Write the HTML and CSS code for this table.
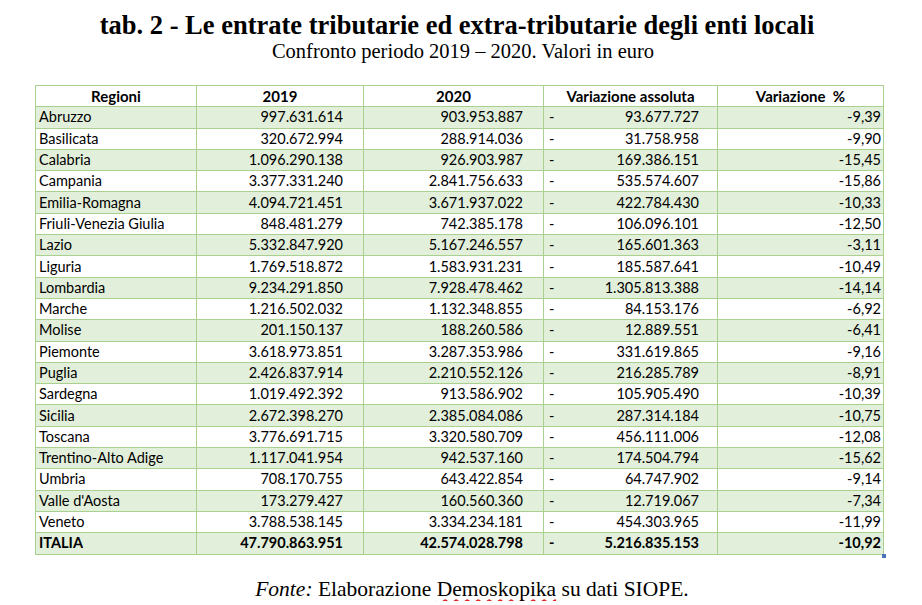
FILE: index.html
```html
<!DOCTYPE html>
<html lang="it">
<head>
<meta charset="utf-8">
<title>tab. 2</title>
<link rel="stylesheet" href="styles.css">
</head>
<body>
<div class="page">
  <h1 class="title">tab. 2 - Le entrate tributarie ed extra-tributarie degli enti locali</h1>
  <p class="subtitle">Confronto periodo 2019 – 2020. Valori in euro</p>
  <div class="table-wrap">
  <table class="data">
    <colgroup>
      <col class="c1"><col class="c2"><col class="c3"><col class="c4"><col class="c5">
    </colgroup>
    <thead>
      <tr><th>Regioni</th><th>2019</th><th>2020</th><th>Variazione assoluta</th><th>Variazione&nbsp; %</th></tr>
    </thead>
    <tbody>
      <tr class="alt"><td>Abruzzo</td><td class="num">997.631.614</td><td class="num">903.953.887</td><td class="acc"><span class="dash">-</span><span>93.677.727</span></td><td class="pct">-9,39</td></tr>
      <tr><td>Basilicata</td><td class="num">320.672.994</td><td class="num">288.914.036</td><td class="acc"><span class="dash">-</span><span>31.758.958</span></td><td class="pct">-9,90</td></tr>
      <tr class="alt"><td>Calabria</td><td class="num">1.096.290.138</td><td class="num">926.903.987</td><td class="acc"><span class="dash">-</span><span>169.386.151</span></td><td class="pct">-15,45</td></tr>
      <tr><td>Campania</td><td class="num">3.377.331.240</td><td class="num">2.841.756.633</td><td class="acc"><span class="dash">-</span><span>535.574.607</span></td><td class="pct">-15,86</td></tr>
      <tr class="alt"><td>Emilia-Romagna</td><td class="num">4.094.721.451</td><td class="num">3.671.937.022</td><td class="acc"><span class="dash">-</span><span>422.784.430</span></td><td class="pct">-10,33</td></tr>
      <tr><td>Friuli-Venezia Giulia</td><td class="num">848.481.279</td><td class="num">742.385.178</td><td class="acc"><span class="dash">-</span><span>106.096.101</span></td><td class="pct">-12,50</td></tr>
      <tr class="alt"><td>Lazio</td><td class="num">5.332.847.920</td><td class="num">5.167.246.557</td><td class="acc"><span class="dash">-</span><span>165.601.363</span></td><td class="pct">-3,11</td></tr>
      <tr><td>Liguria</td><td class="num">1.769.518.872</td><td class="num">1.583.931.231</td><td class="acc"><span class="dash">-</span><span>185.587.641</span></td><td class="pct">-10,49</td></tr>
      <tr class="alt"><td>Lombardia</td><td class="num">9.234.291.850</td><td class="num">7.928.478.462</td><td class="acc"><span class="dash">-</span><span>1.305.813.388</span></td><td class="pct">-14,14</td></tr>
      <tr><td>Marche</td><td class="num">1.216.502.032</td><td class="num">1.132.348.855</td><td class="acc"><span class="dash">-</span><span>84.153.176</span></td><td class="pct">-6,92</td></tr>
      <tr class="alt"><td>Molise</td><td class="num">201.150.137</td><td class="num">188.260.586</td><td class="acc"><span class="dash">-</span><span>12.889.551</span></td><td class="pct">-6,41</td></tr>
      <tr><td>Piemonte</td><td class="num">3.618.973.851</td><td class="num">3.287.353.986</td><td class="acc"><span class="dash">-</span><span>331.619.865</span></td><td class="pct">-9,16</td></tr>
      <tr class="alt"><td>Puglia</td><td class="num">2.426.837.914</td><td class="num">2.210.552.126</td><td class="acc"><span class="dash">-</span><span>216.285.789</span></td><td class="pct">-8,91</td></tr>
      <tr><td>Sardegna</td><td class="num">1.019.492.392</td><td class="num">913.586.902</td><td class="acc"><span class="dash">-</span><span>105.905.490</span></td><td class="pct">-10,39</td></tr>
      <tr class="alt"><td>Sicilia</td><td class="num">2.672.398.270</td><td class="num">2.385.084.086</td><td class="acc"><span class="dash">-</span><span>287.314.184</span></td><td class="pct">-10,75</td></tr>
      <tr><td>Toscana</td><td class="num">3.776.691.715</td><td class="num">3.320.580.709</td><td class="acc"><span class="dash">-</span><span>456.111.006</span></td><td class="pct">-12,08</td></tr>
      <tr class="alt"><td>Trentino-Alto Adige</td><td class="num">1.117.041.954</td><td class="num">942.537.160</td><td class="acc"><span class="dash">-</span><span>174.504.794</span></td><td class="pct">-15,62</td></tr>
      <tr><td>Umbria</td><td class="num">708.170.755</td><td class="num">643.422.854</td><td class="acc"><span class="dash">-</span><span>64.747.902</span></td><td class="pct">-9,14</td></tr>
      <tr class="alt"><td>Valle d'Aosta</td><td class="num">173.279.427</td><td class="num">160.560.360</td><td class="acc"><span class="dash">-</span><span>12.719.067</span></td><td class="pct">-7,34</td></tr>
      <tr><td>Veneto</td><td class="num">3.788.538.145</td><td class="num">3.334.234.181</td><td class="acc"><span class="dash">-</span><span>454.303.965</span></td><td class="pct">-11,99</td></tr>
      <tr class="alt total"><td>ITALIA</td><td class="num">47.790.863.951</td><td class="num">42.574.028.798</td><td class="acc"><span class="dash">-</span><span>5.216.835.153</span></td><td class="pct">-10,92</td></tr>
    </tbody>
  </table>
  <span class="handle"></span>
  </div>
  <p class="source"><em>Fonte:</em> Elaborazione <span class="spell">Demoskopika</span> su dati SIOPE.</p>
</div>
</body>
</html>
```

FILE: styles.css
```css
html, body {
  margin: 0;
  padding: 0;
  background: #ffffff;
}

.page {
  width: 922px;
  color: #000;
}

.title {
  margin: 0;
  padding: 11px 8px 0 0;
  font-family: "Liberation Serif", "DejaVu Serif", serif;
  font-weight: bold;
  font-size: 26.5px;
  line-height: 29px;
  text-align: center;
}

.subtitle {
  margin: 0;
  font-family: "Liberation Serif", "DejaVu Serif", serif;
  font-size: 20.5px;
  line-height: 22px;
  text-align: center;
  padding-left: 4px;
}

.table-wrap {
  position: relative;
  margin: 23px 0 0 35px;
  width: 848px;
}

.data {
  border-collapse: collapse;
  table-layout: fixed;
  width: 848px;
  font-family: "Lato", "Open Sans", sans-serif;
  font-size: 14.5px;
  color: #000;
}

.c1 { width: 161px; }
.c2 { width: 167px; }
.c3 { width: 180px; }
.c4 { width: 174px; }
.c5 { width: 166px; }

.data th,
.data td {
  border: 1px solid #a9d08e;
  height: 20.3px;
  padding: 0 3px;
  line-height: 18px;
  white-space: nowrap;
  overflow: hidden;
}

.data th {
  font-weight: bold;
  font-size: 15px;
  text-align: center;
  background: #ffffff;
}

.data tr.alt td {
  background: #e2efda;
}

.data .num {
  text-align: right;
  padding-right: 20px;
}

.data .acc {
  padding-right: 18px;
}

.data .acc .dash {
  float: left;
  padding-left: 2px;
}

.data .acc span:last-child {
  float: right;
}

.data .pct {
  text-align: right;
  padding-right: 2px;
}

.data tr.total td {
  font-weight: bold;
}

.handle {
  position: absolute;
  right: -3px;
  bottom: -3px;
  width: 4px;
  height: 4px;
  background: #4a72b8;
}

.source {
  margin: 22px 0 0 0;
  font-family: "Liberation Serif", "DejaVu Serif", serif;
  font-size: 21.5px;
  line-height: 24px;
  text-align: center;
  padding-left: 22px;
}

.spell {
  text-decoration-line: underline;
  text-decoration-style: wavy;
  text-decoration-color: #e02828;
  text-decoration-thickness: 1.5px;
  text-underline-offset: 3px;
  text-decoration-skip-ink: none;
}
```
